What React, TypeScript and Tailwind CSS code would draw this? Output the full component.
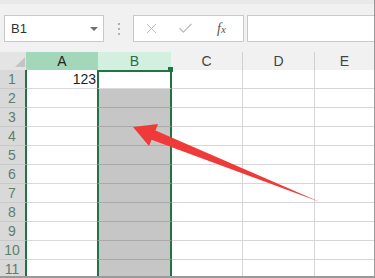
import React from "react";
import { X, Check } from "lucide-react";

const rows = [1, 2, 3, 4, 5, 6, 7, 8, 9, 10, 11];

const Toolbar = () => (
    <div className="flex h-[52px] items-start border-t-[4px] border-[#e9e9e9] bg-[#f1f1f1] pt-[11px]">
        <div className="ml-[4px] flex h-[27px] w-[100px] items-center justify-between border border-[#c9c9c9] bg-white pl-[6px] pr-[5px] text-[13px] text-[#333]">
            <span>B1</span>
            <span className="h-0 w-0 border-x-[4px] border-t-[4px] border-x-transparent border-t-[#707070]" />
        </div>
        <div className="ml-[14px] mt-[8px] flex flex-col gap-[3px]">
            <span className="h-[2px] w-[2px] bg-[#b0b0b0]" />
            <span className="h-[2px] w-[2px] bg-[#b0b0b0]" />
            <span className="h-[2px] w-[2px] bg-[#b0b0b0]" />
        </div>
        <div className="ml-[13px] flex h-[27px] w-[111px] items-center border border-[#c9c9c9] bg-white">
            <X size={17} strokeWidth={1.3} className="ml-[9px] text-[#b8b8b8]" />
            <Check size={17} strokeWidth={1.6} className="ml-[17px] text-[#b8b8b8]" />
            <span className="ml-[23px] font-['Liberation_Serif',serif] text-[14px] italic text-[#555]">
                f<span className="text-[11px]">x</span>
            </span>
        </div>
        <div className="ml-[3px] h-[27px] flex-1 border border-r-0 border-[#c9c9c9] bg-white" />
    </div>
);

const HeaderRow = () => (
    <div className="flex h-[18px] text-[14px] leading-[18px]">
        <div className="relative w-[26px] bg-[#e4e4e4]">
            <svg className="absolute left-[15px] top-[5px]" width="10" height="10" viewBox="0 0 10 10">
                <polygon points="10,0 10,10 0,10" fill="#c4c4c4" />
            </svg>
        </div>
        <div className="w-[72px] bg-[#a3d7b9] text-center text-[#222]">A</div>
        <div className="w-[73px] bg-[#d3efdf] text-center text-[#2d6e4a]">B</div>
        <div className="w-[72px] border-r border-[#d0d0d0] bg-[#f1f1f1] text-center text-[#444]">C</div>
        <div className="w-[72px] border-r border-[#d0d0d0] bg-[#f1f1f1] text-center text-[#444]">D</div>
        <div className="flex-1 bg-[#f1f1f1] text-center text-[#444]">E</div>
    </div>
);

const Row = ({ n }: { n: number }) => (
    <div className="flex h-[19px] text-[14px] leading-[18px]">
        <div className="w-[27px] border-b border-r-2 border-b-[#c9c9c9] border-r-[#217346] bg-[#d9d9d9] pr-[1px] text-center text-[#5d7f6c]">
            {n}
        </div>
        <div className="w-[70px] border-b border-[#dadada] pr-[1px] text-right text-[#222]">
            {n === 1 ? "123" : ""}
        </div>
        {n === 1 ? (
            <div className="w-[75px] border-x-2 border-t-2 border-b border-x-[#217346] border-t-[#217346] border-b-[#dadada] bg-white" />
        ) : (
            <div className="w-[75px] border-x-2 border-b border-x-[#217346] border-b-[#a9a9a9] bg-[#c6c6c6]" />
        )}
        <div className="w-[71px] border-b border-r border-[#d6d6d6]" />
        <div className="w-[72px] border-b border-r border-[#d6d6d6]" />
        <div className="flex-1 border-b border-[#d6d6d6]" />
    </div>
);

export default function App() {
    return (
        <div className="relative h-[278px] w-[375px] overflow-hidden border-b-2 border-r border-[#9a9a9a] bg-white font-['Liberation_Sans',Arial,sans-serif]">
            <Toolbar />
            <HeaderRow />
            <div className="h-[210px] overflow-hidden">
                {rows.map((n) => (
                    <Row key={n} n={n} />
                ))}
            </div>
            <div className="absolute left-[168px] top-[67px] h-[5px] w-[5px] bg-[#217346]" />
            <svg className="pointer-events-none absolute left-0 top-0" width="375" height="278">
                <polygon
                    points="133,127 158,124 155.5,130.5 320,202 151.5,139.8 149,146"
                    fill="#f03a3a"
                />
            </svg>
        </div>
    );
}
